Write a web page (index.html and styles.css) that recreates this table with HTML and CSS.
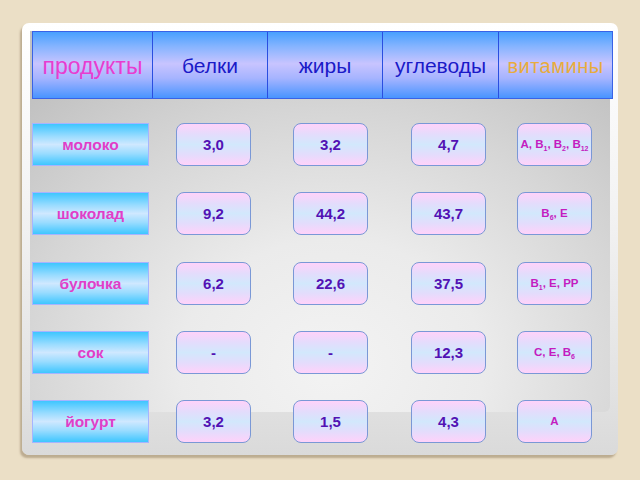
FILE: index.html
```html
<!DOCTYPE html>
<html lang="ru">
<head>
<meta charset="utf-8">
<title>Продукты</title>
<link rel="stylesheet" href="styles.css">
</head>
<body>
<div class="frame">
  <div class="content">
    <div class="header">
      <div class="hcell pink">продукты</div>
      <div class="hcell">белки</div>
      <div class="hcell">жиры</div>
      <div class="hcell">углеводы</div>
      <div class="hcell gold">витамины</div>
    </div>
    <div class="grid">
      <div class="label">молоко</div>
      <div class="val">3,0</div>
      <div class="val">3,2</div>
      <div class="val">4,7</div>
      <div class="val vit">A, B<sub>1</sub>, B<sub>2</sub>, B<sub>12</sub></div>

      <div class="label">шоколад</div>
      <div class="val">9,2</div>
      <div class="val">44,2</div>
      <div class="val">43,7</div>
      <div class="val vit">B<sub>6</sub>, E</div>

      <div class="label">булочка</div>
      <div class="val">6,2</div>
      <div class="val">22,6</div>
      <div class="val">37,5</div>
      <div class="val vit">B<sub>1</sub>, E, PP</div>

      <div class="label">сок</div>
      <div class="val">-</div>
      <div class="val">-</div>
      <div class="val">12,3</div>
      <div class="val vit">C, E, B<sub>6</sub></div>

      <div class="label">йогурт</div>
      <div class="val">3,2</div>
      <div class="val">1,5</div>
      <div class="val">4,3</div>
      <div class="val vit">A</div>
    </div>
  </div>
</div>
</body>
</html>
```

FILE: styles.css
```css
html, body {
  margin: 0;
  padding: 0;
}
body {
  width: 640px;
  height: 480px;
  background: #ebdfc6;
  font-family: "Liberation Sans", Arial, sans-serif;
  overflow: hidden;
}
.frame {
  position: relative;
  margin: 23px 0 0 22px;
  width: 596px;
  height: 432px;
  border-radius: 7px;
  background: linear-gradient(to bottom, #ffffff 0%, #f4f4f4 40%, #e2e2e2 85%, #dadada 100%);
  box-shadow: -2px 3px 2px rgba(150, 130, 100, 0.55);
}
.frame::before {
  content: "";
  position: absolute;
  left: 8px;
  top: 8px;
  width: 580px;
  height: 381px;
  border-radius: 0 0 6px 0;
  background: radial-gradient(ellipse 75% 95% at 52% 88%, #f3f3f3 0%, #ebebeb 35%, #d6d6d6 70%, #c2c2c2 100%);
}
.content {
  position: relative;
  z-index: 1;
  padding: 8px 0 0 10px;
}
.header {
  display: grid;
  grid-template-columns: 119px 115px 115px 116px 114px;
  width: 581px;
  height: 68px;
  box-sizing: border-box;
  border: 1px solid #3a62e6;
  background: linear-gradient(to bottom, #48a0ff 0%, #86b4ff 22%, #c8c4ff 48%, #a6b4ff 70%, #4894ff 100%);
}
.hcell {
  display: flex;
  align-items: center;
  justify-content: center;
  font-size: 21px;
  color: #1a1ac8;
  border-left: 1px solid #2a4ee0;
  padding-top: 2px;
}
.hcell:first-child {
  border-left: none;
}
.hcell.pink {
  color: #e83cd0;
  font-size: 23px;
}
.hcell.gold {
  color: #e8ac3c;
  font-size: 20px;
  letter-spacing: 0.5px;
}
.grid {
  display: grid;
  grid-template-columns: 144px 117px 118px 106px 75px;
  grid-auto-rows: 43px;
  row-gap: 26.25px;
  margin-top: 24px;
}
.label {
  width: 117px;
  box-sizing: border-box;
  border: 1px solid #a6b4ff;
  background: linear-gradient(to bottom, #3ec6ff 0%, #9adcff 30%, #cfe8ff 50%, #9adcff 72%, #3ec6ff 100%);
  display: flex;
  align-items: center;
  justify-content: center;
  font-weight: bold;
  font-size: 15.5px;
  color: #e03ec8;
  padding-top: 1px;
}
.val {
  width: 75px;
  box-sizing: border-box;
  border: 1px solid #7a98d6;
  border-radius: 8px;
  background: linear-gradient(to bottom, #ffd2fa 0%, #e4dcfc 25%, #d2e8fc 50%, #e4dcfc 75%, #ffd2fa 100%);
  display: flex;
  align-items: center;
  justify-content: center;
  font-weight: bold;
  font-size: 15px;
  color: #5212b4;
}
.val.vit {
  display: block;
  line-height: 41px;
  text-align: center;
  font-size: 11.5px;
  color: #c41cc0;
  white-space: nowrap;
}
.val.vit sub {
  font-size: 7px;
  vertical-align: sub;
  line-height: 1;
}
```
